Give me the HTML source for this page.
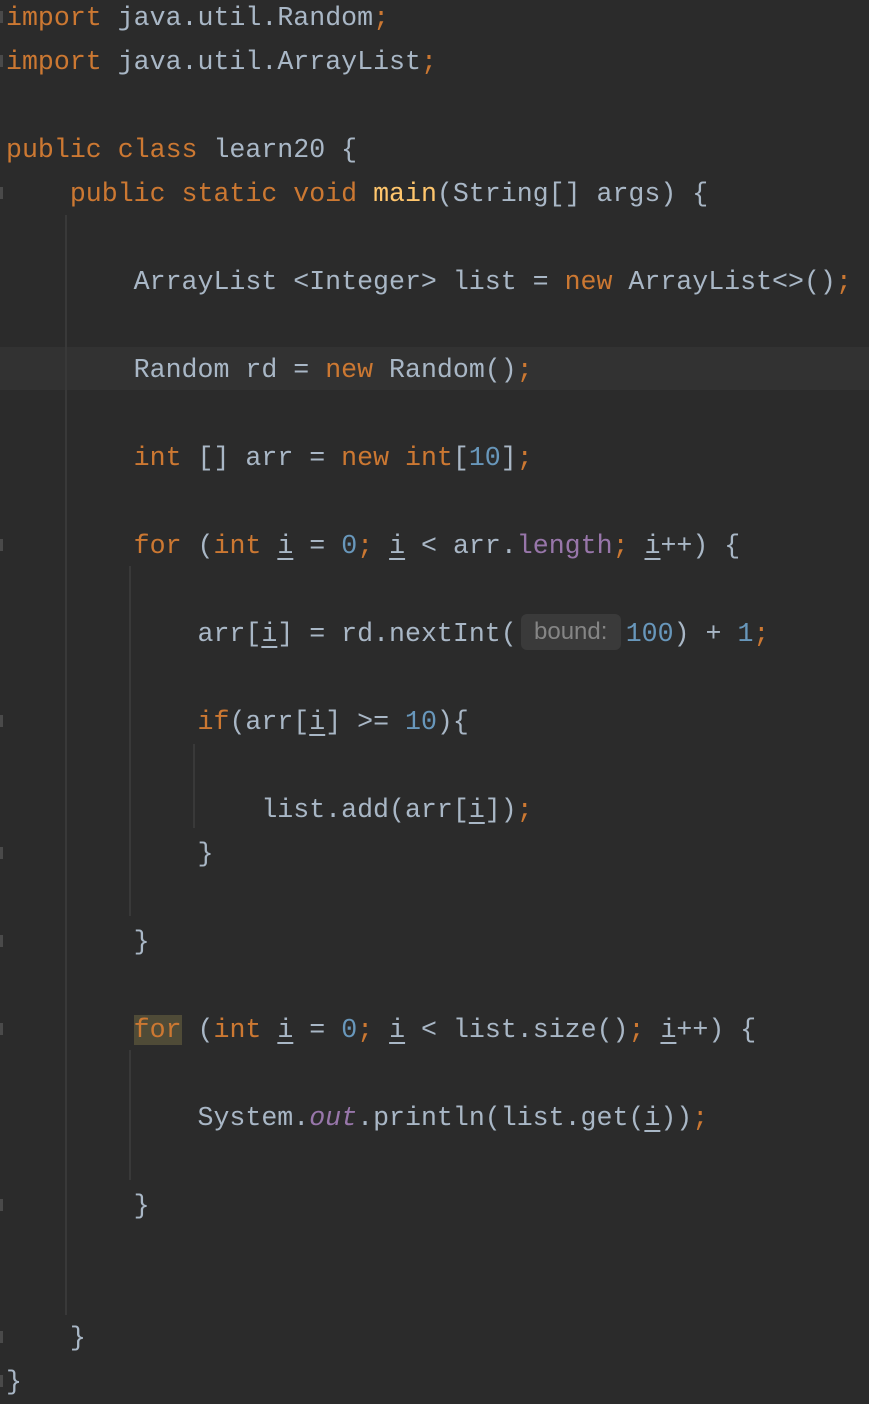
<!DOCTYPE html>
<html><head><meta charset="utf-8">
<style>
html,body{margin:0;padding:0;}
body{width:869px;height:1401px;background:#2b2b2b;position:relative;overflow:hidden;
font-family:"Liberation Mono",monospace;font-size:26.6px;color:#a9b7c6;}
.l{position:absolute;left:6px;height:44px;line-height:44px;white-space:pre;margin-top:1px;}
.k{color:#cc7832}.n{color:#6897bb}.f{color:#9876aa}.fi{color:#9876aa;font-style:italic}.m{color:#ffc66d}
u{text-decoration:underline;text-underline-offset:5px;text-decoration-thickness:2px;}
.g{position:absolute;width:2px;background:#393939;}
.gm{position:absolute;left:0;width:3px;height:12px;background:#4a4a4a;}
.hint{display:inline-block;width:100px;height:36px;line-height:36px;vertical-align:middle;margin:0 5px 0 4px;
background:#3a3a3a;border-radius:6px;color:#858585;font-family:"Liberation Sans",sans-serif;font-size:24px;text-align:center;position:relative;top:-2px}
.hl{background:#4f4b37}
</style></head><body>
<div style="position:absolute;left:0;top:347px;width:869px;height:43px;background:#323232"></div>
<div class="g" style="left:65px;top:215px;height:1100px"></div>
<div class="g" style="left:129px;top:566px;height:350px"></div>
<div class="g" style="left:193px;top:744px;height:84px"></div>
<div class="g" style="left:129px;top:1050px;height:130px"></div>
<div class="gm" style="top:11px"></div>
<div class="gm" style="top:55px"></div>
<div class="gm" style="top:187px"></div>
<div class="gm" style="top:539px"></div>
<div class="gm" style="top:715px"></div>
<div class="gm" style="top:847px"></div>
<div class="gm" style="top:935px"></div>
<div class="gm" style="top:1023px"></div>
<div class="gm" style="top:1199px"></div>
<div class="gm" style="top:1331px"></div>
<div class="gm" style="top:1375px"></div>

<div class="l" style="top:-5px"><span class="k">import</span> java.util.Random<span class="k">;</span></div>
<div class="l" style="top:39px"><span class="k">import</span> java.util.ArrayList<span class="k">;</span></div>
<div class="l" style="top:127px"><span class="k">public class</span> learn20 {</div>
<div class="l" style="top:171px">    <span class="k">public static void</span> <span class="m">main</span>(String[] args) {</div>
<div class="l" style="top:259px">        ArrayList &lt;Integer&gt; list = <span class="k">new</span> ArrayList&lt;&gt;()<span class="k">;</span></div>
<div class="l" style="top:347px">        Random rd = <span class="k">new</span> Random()<span class="k">;</span></div>
<div class="l" style="top:435px">        <span class="k">int</span> [] arr = <span class="k">new int</span>[<span class="n">10</span>]<span class="k">;</span></div>
<div class="l" style="top:523px">        <span class="k">for</span> (<span class="k">int</span> <u>i</u> = <span class="n">0</span><span class="k">;</span> <u>i</u> &lt; arr.<span class="f">length</span><span class="k">;</span> <u>i</u>++) {</div>
<div class="l" style="top:611px">            arr[<u>i</u>] = rd.nextInt(<span class="hint">bound:</span><span class="n">100</span>) + <span class="n">1</span><span class="k">;</span></div>
<div class="l" style="top:699px">            <span class="k">if</span>(arr[<u>i</u>] &gt;= <span class="n">10</span>){</div>
<div class="l" style="top:787px">                list.add(arr[<u>i</u>])<span class="k">;</span></div>
<div class="l" style="top:831px">            }</div>
<div class="l" style="top:919px">        }</div>
<div class="l" style="top:1007px">        <span class="k hl">for</span> (<span class="k">int</span> <u>i</u> = <span class="n">0</span><span class="k">;</span> <u>i</u> &lt; list.size()<span class="k">;</span> <u>i</u>++) {</div>
<div class="l" style="top:1095px">            System.<span class="fi">out</span>.println(list.get(<u>i</u>))<span class="k">;</span></div>
<div class="l" style="top:1183px">        }</div>
<div class="l" style="top:1315px">    }</div>
<div class="l" style="top:1359px">}</div>
</body></html>
